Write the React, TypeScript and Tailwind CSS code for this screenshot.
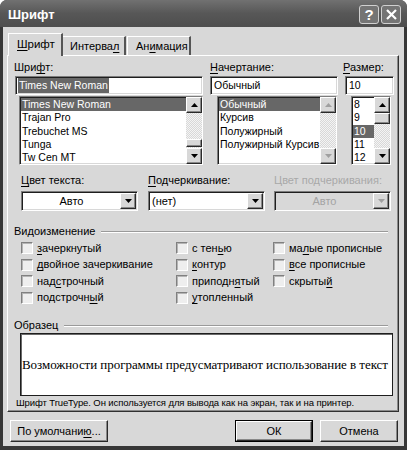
import React from 'react';

// Word "Шрифт" dialog, classic Windows look, grayscale.
const sunken =
  'border border-t-[#7c7c7c] border-l-[#7c7c7c] border-b-white border-r-white shadow-[inset_1px_1px_0_#1e1e1e,inset_-1px_-1px_0_#d8d8d8]';
const raised =
  'border border-t-white border-l-white border-b-[#2a2a2a] border-r-[#2a2a2a] shadow-[inset_-1px_-1px_0_#888888]';

const U: React.FC<{ children: React.ReactNode }> = ({ children }) => (
  <span className="underline underline-offset-[2px] decoration-1">{children}</span>
);

const Arrow: React.FC<{ up?: boolean; disabled?: boolean }> = ({ up, disabled }) => (
  <svg width="7" height="4" viewBox="0 0 7 4">
    <path d={up ? 'M0 4h7L3.5 0z' : 'M0 0h7L3.5 4z'} fill={disabled ? '#a0a0a0' : '#000'} />
  </svg>
);

const ArrowButton: React.FC<{ up?: boolean; disabled?: boolean }> = ({ up, disabled }) => (
  <div className={`w-[16px] h-[16px] shrink-0 bg-[#d8d8d8] flex items-center justify-center ${raised}`}>
    <Arrow up={up} disabled={disabled} />
  </div>
);

const ScrollBar: React.FC<{ thumbTop?: number; thumbHeight?: number; disabled?: boolean }> = ({
  thumbTop,
  thumbHeight,
  disabled,
}) => (
  <div className="w-[16px] flex flex-col">
    <ArrowButton up disabled={disabled} />
    <div className="flex-1 flex flex-col bg-[repeating-conic-gradient(#f4f4f4_0%_25%,#d8d8d8_0%_50%)] bg-[length:2px_2px]">
      {thumbTop !== undefined && (
        <>
          <div style={{ height: thumbTop }} />
          <div className={`bg-[#d8d8d8] ${raised}`} style={{ height: thumbHeight }} />
        </>
      )}
    </div>
    <ArrowButton disabled={disabled} />
  </div>
);

const ListBox: React.FC<{
  items: string[];
  selected: string;
  className: string;
  thumbTop?: number;
  thumbHeight?: number;
  disabled?: boolean;
}> = ({ items, selected, className, thumbTop, thumbHeight, disabled }) => (
  <div className={`h-[69px] flex bg-white ${sunken} ${className}`}>
    <div className="flex-1 overflow-hidden text-[10.5px] pt-[1px] pl-[1px]">
      {items.map((item) => (
        <div
          key={item}
          className={`h-[13.25px] leading-[13px] pl-[1px] whitespace-nowrap ${
            item === selected ? 'bg-[#676767] text-white' : 'text-black'
          }`}
        >
          {item}
        </div>
      ))}
    </div>
    <ScrollBar thumbTop={thumbTop} thumbHeight={thumbHeight} disabled={disabled} />
  </div>
);

const Field: React.FC<{ value: string; selected?: boolean }> = ({ value, selected }) => (
  <div className={`h-[19px] bg-white flex items-center pl-[2px] text-[10.5px] ${sunken}`}>
    <span className={selected ? 'bg-[#676767] text-white px-[1px]' : 'px-[1px]'}>{value}</span>
  </div>
);

const Combo: React.FC<{ value: string; center?: boolean; disabled?: boolean }> = ({ value, center, disabled }) => (
  <div className={`w-[117px] h-[20px] flex p-[1px] ${disabled ? 'bg-[#d8d8d8]' : 'bg-white'} ${sunken}`}>
    <div
      className={`flex-1 text-[11px] leading-[16px] ${center ? 'text-center' : 'pl-[2px]'} ${
        disabled ? 'text-[#a3a3a3]' : 'text-black'
      }`}
    >
      {value}
    </div>
    <ArrowButton disabled={disabled} />
  </div>
);

const Check: React.FC<{ children: React.ReactNode }> = ({ children }) => (
  <div className="h-[16.5px] flex items-center gap-[4px]">
    <div className="w-[12px] h-[12px] bg-[#eeeeee] border border-t-[#808080] border-l-[#808080] border-b-white border-r-white shadow-[inset_1px_1px_0_#b4b4b4]" />
    <span className="text-[11px] leading-[13px]">{children}</span>
  </div>
);

const GroupTitle: React.FC<{ children: React.ReactNode }> = ({ children }) => (
  <div className="flex items-center gap-[6px] pl-[6px] pr-[10px] h-[13px]">
    <span className="text-[11px] leading-[13px]">{children}</span>
    <div className="flex-1 h-[2px] border-t border-t-[#9a9a9a] border-b border-b-white" />
  </div>
);

const Button: React.FC<{ children: React.ReactNode; w: string; isDefault?: boolean }> = ({ children, w, isDefault }) => (
  <div className={`${w} h-[22px] ${isDefault ? 'border border-black' : ''}`}>
    <div className={`h-full flex items-center justify-center text-[11px] bg-[#d8d8d8] ${raised}`}>{children}</div>
  </div>
);

export default function App() {
  return (
    <div className="w-[407px] h-[450px] bg-white font-['Liberation_Sans','Noto_Sans',sans-serif] text-black">
      <div className="w-full h-full flex flex-col bg-[#373737] rounded-t-[7px] overflow-hidden">
        {/* title bar */}
        <div className="h-[27px] shrink-0 flex items-center pl-[8px] pr-[6px] bg-gradient-to-b from-[#717171] via-[#575757] to-[#4e4e4e]">
          <span className="text-white font-bold text-[13px] pt-[2px]">Шрифт</span>
          <div className="ml-auto flex gap-[2px] pt-[1px]">
            <div className="w-[20px] h-[19px] rounded-[3px] border border-[#d0d0d0] bg-[#747474] flex items-center justify-center text-white font-bold text-[15px] leading-none">
              ?
            </div>
            <div className="w-[20px] h-[19px] rounded-[3px] border border-[#d0d0d0] bg-[#747474] flex items-center justify-center">
              <svg width="11" height="11" viewBox="0 0 11 11">
                <path d="M1 1l9 9M10 1l-9 9" stroke="#fff" strokeWidth="2.2" />
              </svg>
            </div>
          </div>
        </div>

        {/* body */}
        <div className="flex-1 mx-[3px] bg-[#d8d8d8] pl-[4px] pr-[5px] pt-[6px] flex flex-col">
          {/* tabs */}
          <div className="h-[22px] flex items-end text-[11px]">
            <div className="relative z-10 -mb-px w-[55px] h-[23px] ml-[1px] bg-[#d8d8d8] border-t border-l border-white border-r-2 border-r-[#555555] flex items-center pl-[8px]">
              <span className="text-[11.5px]">
                <U>Ш</U>рифт
              </span>
            </div>
            <div className="w-[63px] h-[19px] border-t border-white border-r-2 border-r-[#555555] flex items-center pl-[7px]">
              <span>
                Интерва<U>л</U>
              </span>
            </div>
            <div className="w-[64px] h-[19px] ml-[1px] border-t border-l border-white border-r-2 border-r-[#555555] flex items-center pl-[8px]">
              <span>
                Ан<U>и</U>мация
              </span>
            </div>
          </div>

          {/* panel */}
          <div className="h-[357px] border-t border-l border-white border-r border-b border-r-[#303030] border-b-[#303030] shadow-[inset_-1px_-1px_0_#8a8a8a] flex flex-col">
            {/* font / style / size */}
            <div className="flex pl-[7px] pt-[5px] gap-[7px]">
              <div className="w-[188px] flex flex-col">
                <div className="text-[11px] leading-[13px] -ml-px">
                  Шри<U>ф</U>т:
                </div>
                <div className="mt-[2px]">
                  <Field value="Times New Roman" selected />
                </div>
                <ListBox
                  className="mt-[1px] ml-[4px]"
                  items={['Times New Roman', 'Trajan Pro', 'Trebuchet MS', 'Tunga', 'Tw Cen MT']}
                  selected="Times New Roman"
                  thumbTop={26}
                  thumbHeight={8}
                />
              </div>
              <div className="w-[128px] flex flex-col">
                <div className="text-[11px] leading-[13px]">
                  <U>Н</U>ачертание:
                </div>
                <div className="mt-[2px]">
                  <Field value="Обычный" />
                </div>
                <ListBox
                  className="mt-[1px] ml-[7px] mr-[1px]"
                  items={['Обычный', 'Курсив', 'Полужирный', 'Полужирный Курсив']}
                  selected="Обычный"
                  disabled
                />
              </div>
              <div className="w-[49px] flex flex-col">
                <div className="text-[11px] leading-[13px] -ml-[2px]">
                  <U>Р</U>азмер:
                </div>
                <div className="mt-[2px]">
                  <Field value="10" />
                </div>
                <ListBox
                  className="mt-[1px] ml-[6px] mr-[3px]"
                  items={['8', '9', '10', '11', '12']}
                  selected="10"
                  thumbTop={0}
                  thumbHeight={11}
                />
              </div>
            </div>

            {/* colours / underline */}
            <div className="flex pl-[13px] mt-[9px] gap-[10px]">
              <div className="flex flex-col">
                <div className="text-[11px] leading-[13px]">
                  <U>Ц</U>вет текста:
                </div>
                <div className="mt-[4px]">
                  <Combo value="Авто" center />
                </div>
              </div>
              <div className="flex flex-col">
                <div className="text-[11px] leading-[13px]">
                  <U>П</U>одчеркивание:
                </div>
                <div className="mt-[4px]">
                  <Combo value="(нет)" />
                </div>
              </div>
              <div className="flex flex-col -ml-px">
                <div className="text-[11px] leading-[13px] text-[#a8a8a8]">Цвет подчеркивания:</div>
                <div className="mt-[4px]">
                  <Combo value="Авто" center disabled />
                </div>
              </div>
            </div>

            {/* effects */}
            <div className="mt-[14px]">
              <GroupTitle>Видоизменение</GroupTitle>
            </div>
            <div className="flex pl-[13px] mt-[2px]">
              <div className="w-[155px] flex flex-col">
                <Check>
                  <U>з</U>ачеркнутый
                </Check>
                <Check>
                  <U>д</U>войное зачеркивание
                </Check>
                <Check>
                  над<U>с</U>трочный
                </Check>
                <Check>
                  подстрочн<U>ы</U>й
                </Check>
              </div>
              <div className="w-[97px] flex flex-col">
                <Check>
                  с тен<U>ь</U>ю
                </Check>
                <Check>
                  <U>к</U>онтур
                </Check>
                <Check>
                  приподн<U>я</U>тый
                </Check>
                <Check>
                  <U>у</U>топленный
                </Check>
              </div>
              <div className="flex flex-col">
                <Check>
                  ма<U>л</U>ые прописные
                </Check>
                <Check>
                  <U>в</U>се прописные
                </Check>
                <Check>
                  скрыты<U>й</U>
                </Check>
              </div>
            </div>

            {/* sample */}
            <div className="mt-[13px]">
              <GroupTitle>Образец</GroupTitle>
            </div>
            <div className="mt-[1px] ml-[12px] mr-[5px] h-[63px] bg-white border border-[#1e1e1e] shadow-[inset_1px_1px_0_#6a6a6a] flex items-center pl-[1px] overflow-hidden">
              <span className="font-['Liberation_Serif','DejaVu_Serif',serif] text-[13px] tracking-[-0.05px] whitespace-nowrap">
                Возможности программы предусматривают использование в текст
              </span>
            </div>
            <div className="pl-[8px] text-[9.5px] tracking-[-0.1px] leading-[12px] mt-[1px] font-medium">
              Шрифт TrueType. Он используется для вывода как на экран, так и на принтер.
            </div>
          </div>

          {/* buttons */}
          <div className="flex mt-[8px] pl-[3px] pr-[1px]">
            <Button w="w-[98px]">
              <span>
                По умолчани<U>ю</U>...
              </span>
            </Button>
            <div className="ml-auto flex gap-[7px]">
              <Button w="w-[78px]" isDefault>
                ОК
              </Button>
              <Button w="w-[78px]">Отмена</Button>
            </div>
          </div>
        </div>
        <div className="h-[4px] shrink-0" />
      </div>
    </div>
  );
}
